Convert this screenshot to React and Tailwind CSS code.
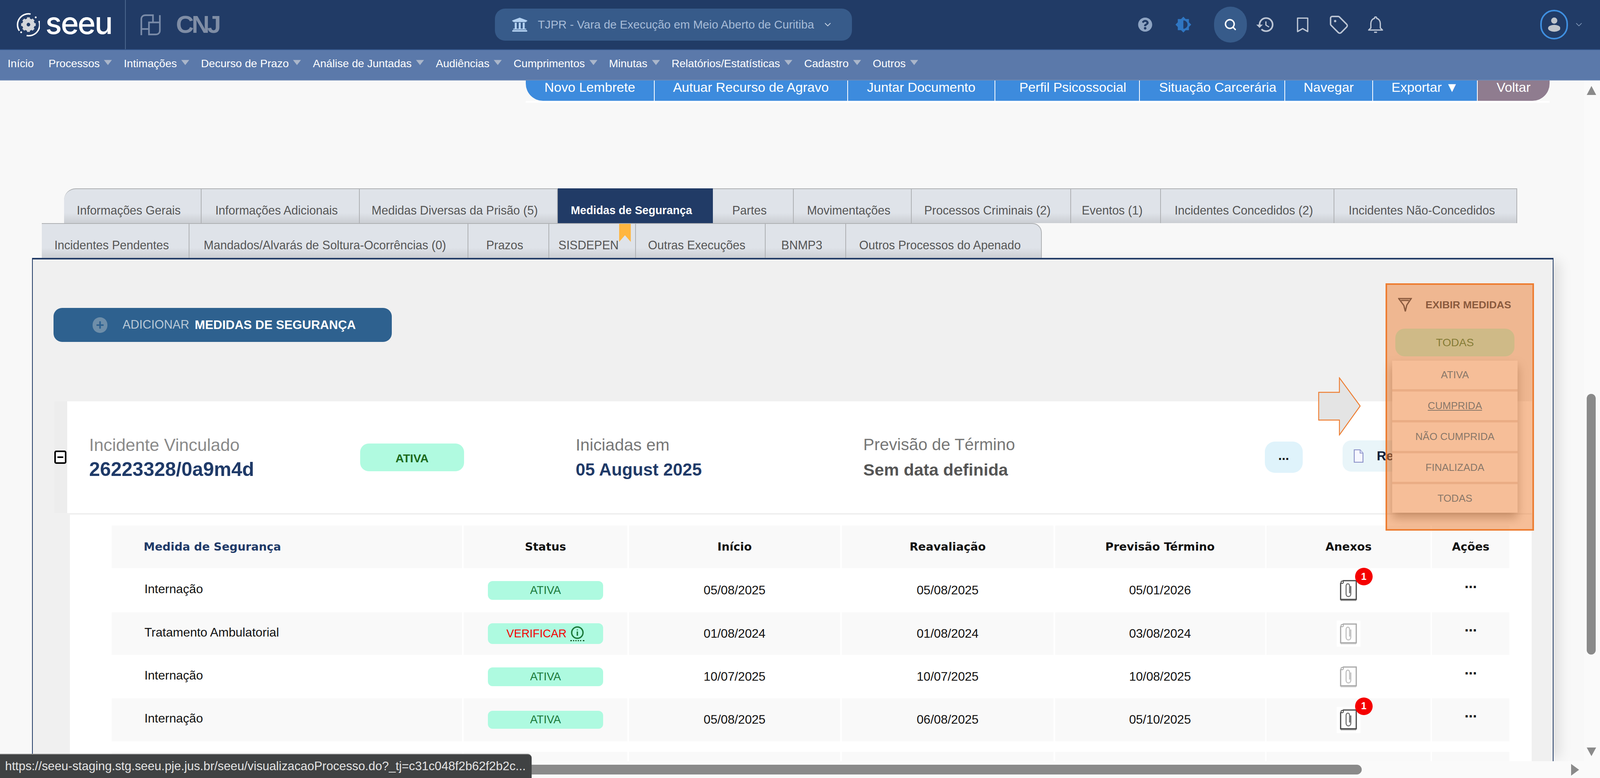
// NOTE: the brief asks for a 4400x1991 window, but the run reports window.innerWidth = 4096
// (height 1991, dpr 1), and a fixed 4400px root was cut off at the right edge.
// Horizontal sizes are therefore in vw (reference px / 44) and heights stay in px, so the page
// fills whichever width it gets: exact reference positions at 4400, proportional at 4096,
// where type is about 7% smaller than the reference.
import React from "react";
import { FaQuestionCircle, FaUniversity } from "react-icons/fa";
import { MdBrightness6, MdHistory } from "react-icons/md";
import { ChevronDown, Search, Tag } from "lucide-react";

const navItems = ["Processos", "Intimações", "Decurso de Prazo", "Análise de Juntadas", "Audiências", "Cumprimentos", "Minutas", "Relatórios/Estatísticas", "Cadastro", "Outros"];

const actions = [
  { t: "Novo Lembrete", c: "w-[8.045vw] rounded-bl-[44px] bg-[#3d8bdd]" },
  { t: "Autuar Recurso de Agravo", c: "w-[12.091vw] bg-[#3d8bdd]" },
  { t: "Juntar Documento", c: "w-[9.205vw] bg-[#3d8bdd]" },
  { t: "Perfil Psicossocial", c: "w-[9.045vw] bg-[#3d8bdd] pl-[0.7vw]" },
  { t: "Situação Carcerária", c: "w-[9.068vw] bg-[#3d8bdd] pl-[0.7vw]" },
  { t: "Navegar", c: "w-[5.5vw] bg-[#3d8bdd]" },
  { t: "Exportar ▼", c: "w-[6.545vw] bg-[#3d8bdd]" },
  { t: "Voltar", c: "w-[4.477vw] rounded-br-[44px] bg-[#8f7c8f]" },
];

const tabsOne = [
  { t: "Informações Gerais", c: "w-[8.591vw] rounded-tl-[30px]" },
  { t: "Informações Adicionais", c: "w-[9.886vw]" },
  { t: "Medidas Diversas da Prisão (5)", c: "w-[12.386vw]" },
  { t: "Medidas de Segurança", c: "w-[9.705vw]", active: true },
  { t: "Partes", c: "w-[5.045vw]" },
  { t: "Movimentações", c: "w-[7.364vw]" },
  { t: "Processos Criminais (2)", c: "w-[9.977vw]" },
  { t: "Eventos (1)", c: "w-[5.614vw]" },
  { t: "Incidentes Concedidos (2)", c: "w-[10.841vw]" },
  { t: "Incidentes Não-Concedidos", c: "w-[11.409vw]" },
];

const tabsTwo = [
  { t: "Incidentes Pendentes", c: "w-[9.227vw]" },
  { t: "Mandados/Alvarás de Soltura-Ocorrências (0)", c: "w-[17.432vw]" },
  { t: "Prazos", c: "w-[5.045vw]" },
  { t: "SISDEPEN", c: "w-[5.432vw]", ribbon: true },
  { t: "Outras Execuções", c: "w-[8.091vw]" },
  { t: "BNMP3", c: "w-[5.045vw]" },
  { t: "Outros Processos do Apenado", c: "w-[12.227vw] rounded-tr-[24px]" },
];

const rows = [
  { n: "Internação", s: "ATIVA", a: "05/08/2025", b: "05/08/2025", c: "05/01/2026", count: true, bg: "bg-white", h: "h-[113px]", pill: "h-[48px]" },
  { n: "Tratamento Ambulatorial", s: "VERIFICAR", a: "01/08/2024", b: "01/08/2024", c: "03/08/2024", bg: "bg-[#f9f9f9]", h: "h-[109px]", pill: "h-[53px]", box: true },
  { n: "Internação", s: "ATIVA", a: "10/07/2025", b: "10/07/2025", c: "10/08/2025", bg: "bg-white", h: "h-[111px]", pill: "h-[48px]" },
  { n: "Internação", s: "ATIVA", a: "05/08/2025", b: "06/08/2025", c: "05/10/2025", count: true, bg: "bg-[#f9f9f9]", h: "h-[110px]", pill: "h-[46px]", box: true },
];

const menu = ["ATIVA", "CUMPRIDA", "NÃO CUMPRIDA", "FINALIZADA", "TODAS"];

function Tri() {
  return (
    <svg viewBox="0 0 22 14" className="ml-[0.273vw] h-[14px] w-[0.5vw] shrink-0 -translate-y-[3px]">
      <path d="M0 0H22L11 14Z" fill="#aab6ca" />
    </svg>
  );
}

function Tab({ t, c, active, ribbon }) {
  const skin = active
    ? "bg-[#213b66] text-white font-bold border-[#213b66] text-[0.7vw]"
    : "bg-linear-to-b from-[#dfe3e9] from-70% to-[#cbced3] text-[#555] border-[#aeb0b3] text-[0.745vw]";
  return (
    <div className={`relative flex shrink-0 items-center justify-center border-t-2 border-r-2 pt-[22px] pr-[0.45vw] whitespace-nowrap ${skin} ${c}`}>
      {t}
      {ribbon && (
        <svg viewBox="0 0 32 46" preserveAspectRatio="none" className="absolute top-0 left-[4.386vw] h-[46px] w-[0.727vw]">
          <path d="M0 0H32V46L16 29L0 46Z" fill="#ffb640" />
        </svg>
      )}
    </div>
  );
}

function ClipIcon({ dim }) {
  const s = dim ? "#a8a8a8" : "#444";
  const p = dim ? "#c4c4c4" : "#777";
  return (
    <svg viewBox="0 0 46 58" className="h-[58px] w-[46px]">
      <path d="M10 4H43V52H3V11Z" fill="#fff" stroke={s} strokeWidth="3" />
      <circle cx="7" cy="8" r="3" fill="#fff" stroke={s} strokeWidth="2" />
      <path d="M3 54H43" stroke={s} strokeWidth="4" opacity=".5" />
      <path d="M29 18V38C29 47 17 47 17 38V18C17 10 26 10 26 18V36" fill="none" stroke={p} strokeWidth="3" />
    </svg>
  );
}

function Attach({ row }) {
  return (
    <div className={`relative flex h-[67px] w-[61px] items-center justify-center ${row.box ? "bg-white" : ""}`}>
      <ClipIcon dim={!row.count} />
      {row.count && (
        <span className="absolute -top-[24px] left-[47px] flex h-[45px] w-[45px] items-center justify-center rounded-full bg-[#f50000] text-[25px] font-bold text-white">1</span>
      )}
    </div>
  );
}

function Row({ row, empty }) {
  const cell = `flex items-center justify-center ${row.bg} ${row.h}`;
  return (
    <>
      <div className={`flex items-center pb-[6px] pl-[2.045vw] text-[0.775vw] text-[#111] ${row.bg} ${row.h}`}>{row.n}</div>
      <div className={cell}>
        {!empty && (
          <div className={`flex w-[7.182vw] items-center justify-center rounded-[12px] bg-[#aefae0] text-[0.705vw] ${row.pill}`}>
            {row.s === "ATIVA" ? (
              <span className="text-[#1b7a3a]">ATIVA</span>
            ) : (
              <span className="flex items-center">
                <span className="text-[#f40000]">VERIFICAR</span>
                <span className="ml-[10px] flex flex-col items-center">
                  <svg viewBox="0 0 34 34" className="h-[34px] w-[34px]">
                    <circle cx="17" cy="17" r="14.5" fill="none" stroke="#1b7a3a" strokeWidth="3.5" />
                    <path d="M17 9V11M17 14V25" stroke="#1b7a3a" strokeWidth="3.5" />
                  </svg>
                  <span className="mt-[2px] h-0 w-[36px] border-t-[3px] border-dotted border-[#1b5a2a]" />
                </span>
              </span>
            )}
          </div>
        )}
      </div>
      <div className={`${cell} text-[0.773vw] text-[#111]`}>{row.a}</div>
      <div className={`${cell} text-[0.773vw] text-[#111]`}>{row.b}</div>
      <div className={`${cell} text-[0.773vw] text-[#111]`}>{row.c}</div>
      <div className={cell}>{!empty && <Attach row={row} />}</div>
      <div className={`${cell} pb-[38px] text-[38px] leading-none font-bold text-[#111]`}>{!empty && "..."}</div>
    </>
  );
}

const gearTeeth = [0, 45, 90, 135, 180, 225, 270, 315];

export default function App() {
  return (
    <div className="relative flex h-[1991px] w-screen flex-col overflow-hidden bg-[#f8f8f8] font-['Liberation_Sans',Arial,sans-serif]">
      {/* top bar */}
      <header className="relative z-20 flex h-[128px] shrink-0 items-center border-b-2 border-[#34558a] bg-[#213b66]">
        <div className="flex h-full w-[7.864vw] shrink-0 items-center border-r-2 border-[#4d688f] pl-[1.045vw]">
          <svg viewBox="0 0 64 64" className="h-[64px] w-[1.455vw] shrink-0">
            <path d="M7 49A30 30 0 0 1 38 3" fill="none" stroke="#fff" strokeWidth="4" />
            <path d="M61 22A30 30 0 0 1 27 62" fill="none" stroke="#fff" strokeWidth="4" />
            <circle cx="52" cy="12" r="2.5" fill="#fff" />
            <circle cx="12" cy="53" r="2.5" fill="#fff" />
            {gearTeeth.map((a) => (
              <rect key={a} x="28" y="12" width="8" height="8" fill="#d4d6da" transform={`rotate(${a} 32 32)`} />
            ))}
            <circle cx="32" cy="32" r="11" fill="none" stroke="#d4d6da" strokeWidth="12" />
          </svg>
          <span className="ml-[0.341vw] -translate-y-[4px] font-['Inter',sans-serif] text-[1.909vw] leading-none font-medium tracking-[-0.068vw] text-white">seeu</span>
        </div>
        <svg viewBox="0 0 57 57" className="ml-[0.909vw] h-[57px] w-[1.295vw] shrink-0" fill="none" stroke="#7a8ba8" strokeWidth="4.5">
          <path d="M3 57V13C3 6 8 2 15 2H35V22" />
          <path d="M54 2V44C54 51 49 55 42 55H24V22H54" />
          <path d="M3 40H24" />
        </svg>
        <span className="ml-[0.932vw] w-[2.591vw] shrink-0 text-[1.545vw] leading-none font-bold tracking-[-0.136vw] text-[#7f8da5]">CNJ</span>
        <button className="ml-[17.341vw] flex h-[82px] w-[22.318vw] shrink-0 items-center rounded-[26px] bg-[#375b8a] pl-[1.045vw]">
          <FaUniversity className="h-[42px] w-[1vw] text-[#b4d2f2]" />
          <span className="ml-[0.636vw] text-[0.723vw] whitespace-nowrap text-[#a7bcd8]">TJPR - Vara de Execução em Meio Aberto de Curitiba</span>
          <ChevronDown className="ml-[0.545vw] h-[28px] w-[0.636vw] text-[#c8d4e4]" strokeWidth={1.8} />
        </button>
        <FaQuestionCircle className="ml-[17.864vw] h-[40px] w-[0.909vw] shrink-0 text-[#8ea4c3]" />
        <MdBrightness6 className="ml-[1.409vw] h-[46px] w-[1.045vw] shrink-0 text-[#2f76c2]" />
        <div className="ml-[1.409vw] flex h-[92px] w-[2.045vw] shrink-0 items-center justify-center rounded-full bg-[#375b8a]">
          <Search className="h-[36px] w-[0.818vw] text-white" strokeWidth={2.6} />
        </div>
        <MdHistory className="ml-[0.545vw] h-[54px] w-[1.227vw] shrink-0 text-[#bcc5d4]" />
        <svg viewBox="0 0 36 43" className="ml-[1.295vw] h-[43px] w-[0.818vw] shrink-0" fill="none" stroke="#bcc5d4" strokeWidth="3.5" strokeLinejoin="round">
          <path d="M4 3H32V40L18 32L4 40Z" />
        </svg>
        <Tag className="ml-[1.239vw] h-[55px] w-[1.25vw] shrink-0 text-[#bcc5d4]" strokeWidth={1.75} />
        <svg viewBox="0 0 44 48" className="ml-[1.17vw] h-[48px] w-[1vw] shrink-0" fill="none" stroke="#bcc5d4" strokeWidth="3.5" strokeLinejoin="round">
          <path d="M22 3C24 3 25 5 25 7C31 8 35 14 35 21V33L41 39H3L9 33V21C9 14 13 8 19 7C19 5 20 3 22 3Z" />
          <path d="M18 45H26" />
        </svg>
        <div className="ml-[9.795vw] flex h-[76px] w-[1.727vw] shrink-0 items-center justify-center rounded-full border-[4px] border-[#3f8fe0]">
          <svg viewBox="0 0 34 40" className="h-[40px] w-[0.773vw]" fill="#bfc4cb">
            <circle cx="17" cy="9" r="8.5" />
            <ellipse cx="17" cy="30" rx="17" ry="9.5" />
          </svg>
        </div>
        <ChevronDown className="ml-[0.364vw] h-[30px] w-[0.636vw] shrink-0 text-[#8ea4c3]" strokeWidth={1.5} />
      </header>

      {/* menu bar */}
      <nav className="relative z-20 flex h-[78px] shrink-0 items-center border-b-2 border-[#6e8ab5] bg-[#5b79aa] pb-[6px] pl-[0.477vw] text-[0.686vw] text-white">
        <span className="mr-[0.182vw]">Início</span>
        {navItems.map((n) => (
          <span key={n} className="ml-[0.735vw] flex shrink-0 items-center">
            {n}
            <Tri />
          </span>
        ))}
      </nav>

      <div className="flex min-h-0 flex-1">
        <div className="flex min-w-0 flex-1 flex-col">
          {/* action bar */}
          <div className="ml-[32.864vw] flex h-[52px] w-[63.977vw] shrink-0 shadow-[0_5px_0_#ffffff]">
            {actions.map((a, i) => (
              <div key={a.t} className={`h-full shrink-0 text-center text-[0.83vw] leading-[34px] whitespace-nowrap text-white ${i < actions.length - 1 ? "border-r-2 border-white" : ""} ${a.c}`}>
                {a.t}
              </div>
            ))}
          </div>

          {/* tabs */}
          <div className="mt-[224px] ml-[4vw] flex h-[89px] shrink-0">
            {tabsOne.map((t) => <Tab key={t.t} {...t} />)}
          </div>
          <div className="ml-[2.614vw] flex h-[89px] shrink-0">
            {tabsTwo.map((t) => <Tab key={t.t} {...t} />)}
          </div>

          {/* panel */}
          <main className="ml-[2vw] flex min-h-0 w-[95.091vw] flex-1 flex-col border-x-2 border-t-4 border-x-[#213b66] border-t-[#213b66] bg-[#f0f0f0] shadow-[24px_0_30px_-8px_rgba(0,0,0,0.1)]">
            <button className="mt-[124px] ml-[1.295vw] flex h-[87px] w-[21.136vw] shrink-0 items-center rounded-[22px] bg-[#2e618f] pl-[2.455vw] text-[0.75vw] whitespace-nowrap">
              <span className="flex h-[40px] w-[0.909vw] items-center justify-center rounded-full bg-[#6e8ea9] text-[36px] leading-none font-bold text-[#2e618f]">+</span>
              <span className="ml-[0.955vw] font-light text-[#b9c9d8]">ADICIONAR</span>
              <span className="ml-[0.341vw] text-[0.775vw] font-bold text-white">MEDIDAS DE SEGURANÇA</span>
            </button>

            <section className="mt-[152px] ml-[1.341vw] flex h-[286px] shrink-0">
              <div className="flex w-[0.818vw] shrink-0 items-center bg-[#ededed]">
                <span className="flex h-[34px] w-[0.75vw] items-center justify-center rounded-[5px] border-[4px] border-black bg-white">
                  <span className="h-[4px] w-[0.364vw] bg-black" />
                </span>
              </div>
              <div className="flex w-[91.545vw] shrink-0 items-center bg-white">
                <div className="ml-[1.364vw] w-[16.932vw] shrink-0">
                  <p className="text-[1.08vw] leading-[56px] text-[#8a8a8a]">Incidente Vinculado</p>
                  <p className="mt-[6px] text-[1.22vw] leading-[56px] font-bold text-[#1f3a68]">26223328/0a9m4d</p>
                </div>
                <div className="flex h-[71px] w-[6.5vw] shrink-0 items-center justify-center rounded-[22px] bg-[#b0fae0] pt-[6px] text-[0.727vw] font-bold text-[#1c6b1c]">ATIVA</div>
                <div className="ml-[6.977vw] w-[17.977vw] shrink-0">
                  <p className="text-[1.045vw] leading-[56px] text-[#777]">Iniciadas em</p>
                  <p className="mt-[8px] text-[1.08vw] leading-[56px] font-bold text-[#1f3a68]">05 August 2025</p>
                </div>
                <div className="w-[25.091vw] shrink-0">
                  <p className="text-[1.03vw] leading-[56px] text-[#777]">Previsão de Término</p>
                  <p className="mt-[8px] text-[1.057vw] leading-[56px] font-bold text-[#555]">Sem data definida</p>
                </div>
                <div className="flex h-[80px] w-[2.364vw] shrink-0 items-center justify-center rounded-[26px] bg-[#dff3fb] pb-[8px] text-[0.818vw] font-bold text-[#111]">...</div>
                <div className="ml-[2.5vw] flex h-[80px] w-[7.5vw] shrink-0 -translate-y-[3px] items-center rounded-[22px] bg-[#e9f5f9] pl-[0.682vw] text-[0.818vw] font-bold text-[#111f38]">
                  <svg viewBox="0 0 28 38" className="h-[38px] w-[0.636vw] shrink-0">
                    <path d="M2 2H18L26 11V36H2Z" fill="#f6f7ff" stroke="#8d93c9" strokeWidth="2.5" />
                    <path d="M18 2V11H26" fill="#dfe3fa" stroke="#8d93c9" strokeWidth="2" />
                  </svg>
                  <span className="ml-[0.818vw]">Relatório</span>
                </div>
              </div>
            </section>

            {/* table area */}
            <section className="mt-[4px] ml-[2.318vw] min-h-0 w-[91.364vw] flex-1 overflow-hidden bg-white pt-[28px] pl-[2.614vw]">
              <div className="grid grid-cols-[21.909vw_10.227vw_13.227vw_13.227vw_13.136vw_10.25vw_4.841vw] gap-x-[0.091vw] text-center">
                <div className="flex h-[109px] items-center bg-[#f9f9f9] pl-[2vw] font-['DejaVu_Sans',sans-serif] text-[0.705vw] font-bold text-[#1f3a68]">Medida de Segurança</div>
                {["Status", "Início", "Reavaliação", "Previsão Término", "Anexos", "Ações"].map((h) => (
                  <div key={h} className="flex h-[109px] items-center justify-center bg-[#f9f9f9] font-['DejaVu_Sans',sans-serif] text-[0.705vw] font-bold text-[#111]">{h}</div>
                ))}
                {rows.map((r, i) => <Row key={i} row={r} />)}
                <div className="col-span-7 h-[27px] bg-white" />
                <Row empty row={{ n: "", bg: "bg-[#f9f9f9]", h: "h-[110px]" }} />
              </div>
            </section>
          </main>
        </div>

        {/* vertical scrollbar */}
        <div className="flex w-[1vw] shrink-0 flex-col items-center bg-[#fafafa] pr-[0.091vw]">
          <svg viewBox="0 0 26 23" preserveAspectRatio="none" className="mt-[14px] h-[23px] w-[0.591vw]"><path d="M13 0L26 23H0Z" fill="#8a8a8a" /></svg>
          <div className="mt-[765px] h-[667px] w-[0.568vw] rounded-full bg-[#8a8a8a]" />
          <svg viewBox="0 0 26 22" preserveAspectRatio="none" className="mt-[238px] h-[22px] w-[0.591vw]"><path d="M0 0H26L13 22Z" fill="#8a8a8a" /></svg>
        </div>
      </div>

      {/* horizontal scrollbar */}
      <div className="relative z-10 flex h-[43px] shrink-0 items-center bg-[#fafafa]">
        <div className="ml-[1.136vw] h-[25px] w-[83.977vw] rounded-full bg-[#8a8a8a]" />
        <svg viewBox="0 0 22 30" preserveAspectRatio="none" className="ml-[13.091vw] h-[30px] w-[0.5vw]"><path d="M0 0L22 15L0 30Z" fill="#8a8a8a" /></svg>
      </div>

      {/* status tooltip */}
      <div className="absolute bottom-0 left-0 z-30 flex h-[62px] w-[33.227vw] items-center rounded-tr-[10px] border-t-2 border-[#8a8a8a] bg-[#404243] pl-[0.318vw] text-[0.764vw] whitespace-nowrap text-[#e4e4e4]">
        https://seeu-staging.stg.seeu.pje.jus.br/seeu/visualizacaoProcesso.do?_tj=c31c048f2b62f2b2c...
      </div>

      {/* arrow callout */}
      <svg viewBox="0 0 118 150" preserveAspectRatio="none" className="absolute top-[965px] left-[82.364vw] z-30 h-[150px] w-[2.682vw]">
        <path d="M2 39H59V2L116 74L59 148V110H2Z" fill="#e4e4e4" stroke="#ed7d31" strokeWidth="2.5" />
      </svg>

      {/* filter dropdown */}
      <div className="absolute top-[725px] left-[86.591vw] z-30 flex h-[633px] w-[9.273vw] flex-col">
        <div className="mt-[35px] ml-[0.795vw] flex h-[40px] items-center">
          <svg viewBox="0 0 38 40" className="h-[40px] w-[0.864vw] shrink-0" fill="none" stroke="#27374b" strokeWidth="3.5">
            <path d="M2 3H36L24 21L20 38L16 22Z" />
            <path d="M8 8H30" />
          </svg>
          <span className="ml-[0.841vw] text-[0.652vw] font-bold whitespace-nowrap text-[#27374b]">EXIBIR MEDIDAS</span>
        </div>
        <div className="mt-[41px] ml-[0.614vw] flex h-[71px] w-[7.455vw] items-center justify-center rounded-[24px] bg-[#b0f7dd] text-[0.693vw] text-[#1b7a3a]">TODAS</div>
        <div className="mt-[11px] ml-[0.432vw] flex w-[7.818vw] flex-col gap-[6px] bg-[#e6dcd8] shadow-[0_14px_24px_rgba(0,0,0,0.35)]">
          {menu.map((m, i) => (
            <div key={m} className={`flex h-[73px] items-center justify-center bg-white text-[0.636vw] text-[#22709f] ${i === 1 ? "underline" : ""}`}>{m}</div>
          ))}
        </div>
      </div>
      <div className="pointer-events-none absolute top-[725px] left-[86.591vw] z-30 h-[633px] w-[9.273vw] border-[4px] border-[#ed7d31] bg-[#ed7d3180]" />
    </div>
  );
}
